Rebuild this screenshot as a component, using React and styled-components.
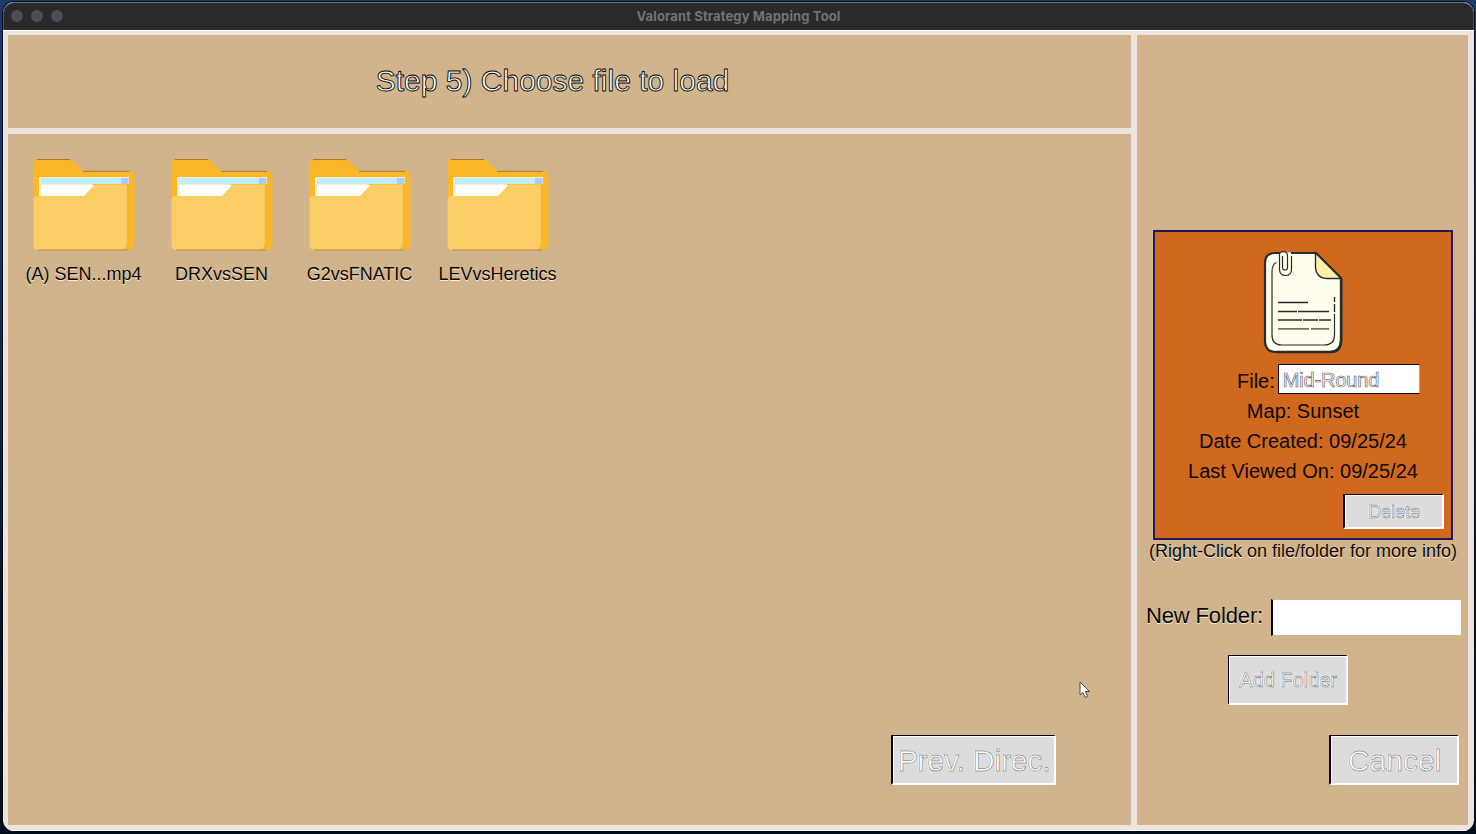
import React from "react";
import styled, { createGlobalStyle, css } from "styled-components";

const Global = createGlobalStyle`
  * { box-sizing: border-box; }
  html, body { margin: 0; padding: 0; }
  body {
    font-family: "Liberation Sans", Arial, sans-serif;
    color: #0b0805;
    overflow: hidden;
  }
`;

const etched = {
  heading: css`
    color: #fff;
    -webkit-text-stroke: 0.8px #0b0805;
    text-shadow: 0 0 1px #0b0805;
  `,
  label: css`
    color: #0b0805;
    text-shadow: 0 1px 0 rgba(255, 255, 255, 0.75);
  `,
  button: css`
    color: #fff;
    -webkit-text-stroke: 0.5px #6a6a6a;
    text-shadow: -1px 0 0 #fff;
  `,
};

const Desktop = styled.div`
  width: 1476px;
  height: 834px;
  padding: 2px 2px 3px 3px;
  background: linear-gradient(#1d3c6c 0, #1c3259 30%, #0b1a30 65%, #030d1b 100%);
`;

const AppWindow = styled.div`
  height: 829px;
  display: flex;
  flex-direction: column;
  border-radius: 11px;
  overflow: hidden;
  background: #ece4df;
  box-shadow: 0 0 0 1px #050b18;
`;

const TitleBar = styled.header`
  height: 28px;
  flex: none;
  display: grid;
  grid-template-columns: 120px 1fr 120px;
  align-items: center;
  padding-bottom: 1px;
  background: #282b2a;
  border: 1px solid #505354;
  border-top-color: #707477;
  border-bottom: 0;
  border-radius: 11px 11px 0 0;
`;

const Lights = styled.div`
  display: flex;
  gap: 8px;
  padding-left: 7px;
`;

const Light = styled.span`
  width: 12px;
  height: 12px;
  border-radius: 50%;
  background: #4b4d5b;
`;

const WindowTitle = styled.div`
  text-align: center;
  font: 700 13px/24px Inter, sans-serif;
  letter-spacing: 0.13px;
  padding-bottom: 1px;
  color: #717373;
`;

const Body = styled.div`
  flex: 1;
  display: grid;
  grid-template-columns: 1123px 331px;
  column-gap: 6px;
  padding: 4px 5px 5px;
  border-top: 1px solid #fff;
  border-bottom: 1px solid #fff;
`;

const LeftColumn = styled.div`
  display: grid;
  grid-template-rows: 93px 691px;
  row-gap: 6px;
`;

const Panel = styled.section`
  background: #d2b48c;
`;

const HeadingPanel = styled(Panel)`
  padding: 29px 34px 0 0;
  text-align: center;
`;

const Heading = styled.h1`
  margin: 0;
  font-size: 30px;
  font-weight: 400;
  line-height: 34px;
  ${etched.heading}
`;

const BrowserPanel = styled(Panel)`
  display: flex;
  flex-direction: column;
  justify-content: space-between;
  padding: 24px 75px 40px 6px;
`;

const FolderGrid = styled.div`
  display: flex;
`;

const FolderItem = styled.div`
  width: 138px;
  display: flex;
  flex-direction: column;
  align-items: center;
  padding-left: 1px;
`;

const FolderName = styled.span`
  margin-top: 12px;
  font-size: 18px;
  line-height: 22px;
  white-space: nowrap;
  ${etched.label}
`;

const Button = styled.button`
  width: ${(p) => p.$w}px;
  height: ${(p) => p.$h}px;
  padding: 2px 0 0 1px;
  border-style: solid;
  border-width: 1px 2px 2px ${(p) => p.$edge || 2}px;
  border-color: #080403 #fff #fff #080403;
  border-radius: 0;
  background: #dcdcdc;
  box-shadow: inset 1px 1px 0 #fff;
  font-family: inherit;
  font-size: ${(p) => p.$size}px;
  letter-spacing: ${(p) => p.$tracking || 0}px;
  white-space: nowrap;
  ${etched.button}
`;

const BrowserActions = styled.div`
  display: flex;
  justify-content: flex-end;
`;

const SidePanel = styled(Panel)`
  display: flex;
  flex-direction: column;
  padding-top: 195px;
`;

const FileCard = styled.div`
  width: 300px;
  height: 310px;
  margin-left: 16px;
  display: flex;
  flex-direction: column;
  align-items: center;
  padding-top: 18px;
  border: 2px solid #24195a;
  background: #d0691e;
`;

const FileNameRow = styled.div`
  width: 100%;
  height: 30px;
  display: flex;
  align-items: flex-start;
  gap: 3px;
  margin-top: 10px;
  padding-left: 82px;
  font-size: 20px;
  line-height: 34px;
`;

const FileNameInput = styled.div`
  width: 142px;
  height: 30px;
  padding: 0 4px;
  border: 1px solid #100906;
  border-right-color: #aaa;
  background: #fff;
  line-height: 30px;
  letter-spacing: -0.15px;
  color: #fff;
  -webkit-text-stroke: 0.6px #555;
`;

const FileFact = styled.div`
  height: 30px;
  font-size: 20px;
  line-height: 34px;
`;

const CardActions = styled.div`
  align-self: flex-end;
  margin: 10px 7px 0 0;
`;

const Hint = styled.div`
  height: 22px;
  padding-left: 1px;
  text-align: center;
  font-size: 18px;
  line-height: 22px;
  ${etched.label}
`;

const NewFolderRow = styled.div`
  display: flex;
  gap: 7px;
  margin-top: 37px;
  padding-left: 9px;
  font-size: 22px;
  line-height: 33px;
  white-space: nowrap;
`;

const NewFolderLabel = styled.label`
  width: 118px;
  letter-spacing: -0.14px;
  ${etched.label}
`;

const NewFolderInput = styled.div`
  width: 191px;
  height: 37px;
  border: 1px solid #c4b8a6;
  border-left: 2px solid #100906;
  background: #fff;
`;

const AddFolderRow = styled.div`
  margin: 19px 0 0 91px;
`;

const CancelRow = styled.div`
  display: flex;
  justify-content: flex-end;
  margin: 30px 9px 0 0;
`;

const Pointer = styled.svg`
  position: absolute;
  left: 1078px;
  top: 680px;
  display: block;
`;

const Art = styled.svg`
  display: block;
  flex: none;
`;

const FolderArt = () => (
  <Art width="102" height="93" viewBox="0 0 102 93">
    <path
      d="M0.5 88V6Q0.5 1.5 5 1.5H36Q38 1.5 40 3L50 13H96Q101.500 13 101.500 19V86Q101.500 92 95 92H6Q0.500 92 0.500 88Z"
      fill="#fab829"
    />
    <path d="M4 1.500H37M50 13.300H96" stroke="#b5772e" strokeWidth="1" />
    <path d="M6 19H96V26H60L50 40H6Z" fill="#fdecd0" />
    <path d="M8 20H88V26H8Z" fill="#bdeefa" />
    <path d="M88 20H95.500V26H88Z" fill="#a9cdf2" />
    <path d="M8 27H62L50 40H8Z" fill="#fff" />
    <path
      d="M0.500 42Q0.500 38 5 38H51L62 26.500H94V86Q94 92 89 92H6Q0.500 92 0.500 87Z"
      fill="#fbcd65"
    />
    <path d="M94.500 27V85Q94.500 89 92 91" fill="none" stroke="#edb746" strokeWidth="1.500" />
    <path d="M5 92H95" stroke="#b78c43" strokeWidth="1" />
  </Art>
);

const DocumentArt = () => (
  <Art width="82" height="104" viewBox="0 0 82 104" fill="none" stroke="#2a2b2b">
    <path
      d="M13 3H54L79 28V90Q79 102 68 102H14Q3 102 3 91V13Q3 3 13 3Z"
      fill="#fffdec"
      strokeWidth="2.200"
    />
    <path d="M79.200 29V90Q79 102 68 102H14" strokeWidth="2.600" />
    <path d="M53.500 3V17Q54 28.500 66 28.500H79Z" fill="#fdf0a8" strokeWidth="1.400" />
    <path d="M14.500 12.500Q10 14 10 22V85Q10 95 20 95H62Q72.500 95 72.500 85V64" strokeWidth="1.200" />
    <path d="M72.500 47V52M72.500 54V62" strokeWidth="1.400" />
    <path d="M18 3.300H29" stroke="#fffdec" strokeWidth="2.200" />
    <path
      d="M20.500 6V17.500Q20.500 20 23 20Q25.500 20 25.500 17.500V5Q25 1.500 21.500 1.500Q17.500 1.500 17.500 5V19Q17.500 25.500 23.500 25.500Q29.500 25.500 29.500 19V6"
      strokeWidth="1.200"
    />
    <path d="M16 52.500H46M16 61.500H35M36 61.500H67M16 70H40M41 70H56M57 70H69" strokeWidth="1.300" />
    <path d="M16 78.800H47M49 78.800H67" stroke="#72736d" strokeWidth="1.700" />
  </Art>
);

const folders = ["(A) SEN...mp4", "DRXvsSEN", "G2vsFNATIC", "LEVvsHeretics"];

const facts = ["Map: Sunset", "Date Created: 09/25/24", "Last Viewed On: 09/25/24"];

export default function App() {
  return (
    <Desktop>
      <Global />
      <AppWindow>
        <TitleBar>
          <Lights>
            <Light />
            <Light />
            <Light />
          </Lights>
          <WindowTitle>Valorant Strategy Mapping Tool</WindowTitle>
        </TitleBar>
        <Body>
          <LeftColumn>
            <HeadingPanel>
              <Heading>Step 5) Choose file to load</Heading>
            </HeadingPanel>
            <BrowserPanel>
              <FolderGrid>
                {folders.map((name) => (
                  <FolderItem key={name}>
                    <FolderArt />
                    <FolderName>{name}</FolderName>
                  </FolderItem>
                ))}
              </FolderGrid>
              <BrowserActions>
                <Button $w={165} $h={50} $size={30} $tracking={-0.15}>Prev. Direc.</Button>
              </BrowserActions>
            </BrowserPanel>
          </LeftColumn>
          <SidePanel>
            <FileCard>
              <DocumentArt />
              <FileNameRow>
                <span>File:</span>
                <FileNameInput>Mid-Round</FileNameInput>
              </FileNameRow>
              {facts.map((fact) => (
                <FileFact key={fact}>{fact}</FileFact>
              ))}
              <CardActions>
                <Button $w={101} $h={35} $size={18}>Delete</Button>
              </CardActions>
            </FileCard>
            <Hint>(Right-Click on file/folder for more info)</Hint>
            <NewFolderRow>
              <NewFolderLabel>New Folder:</NewFolderLabel>
              <NewFolderInput />
            </NewFolderRow>
            <AddFolderRow>
              <Button $w={120} $h={50} $size={20} $edge={1}>Add Folder</Button>
            </AddFolderRow>
            <CancelRow>
              <Button $w={130} $h={50} $size={30}>Cancel</Button>
            </CancelRow>
          </SidePanel>
        </Body>
      </AppWindow>
      <Pointer width="14" height="20" viewBox="0 0 14 20">
        <path
          d="M2 2V15L5 12.500L7 17.500L9.500 16.500L7.500 11.500H11.500Z"
          fill="#fff"
          stroke="#4f4a48"
          strokeWidth="1"
        />
      </Pointer>
    </Desktop>
  );
}
